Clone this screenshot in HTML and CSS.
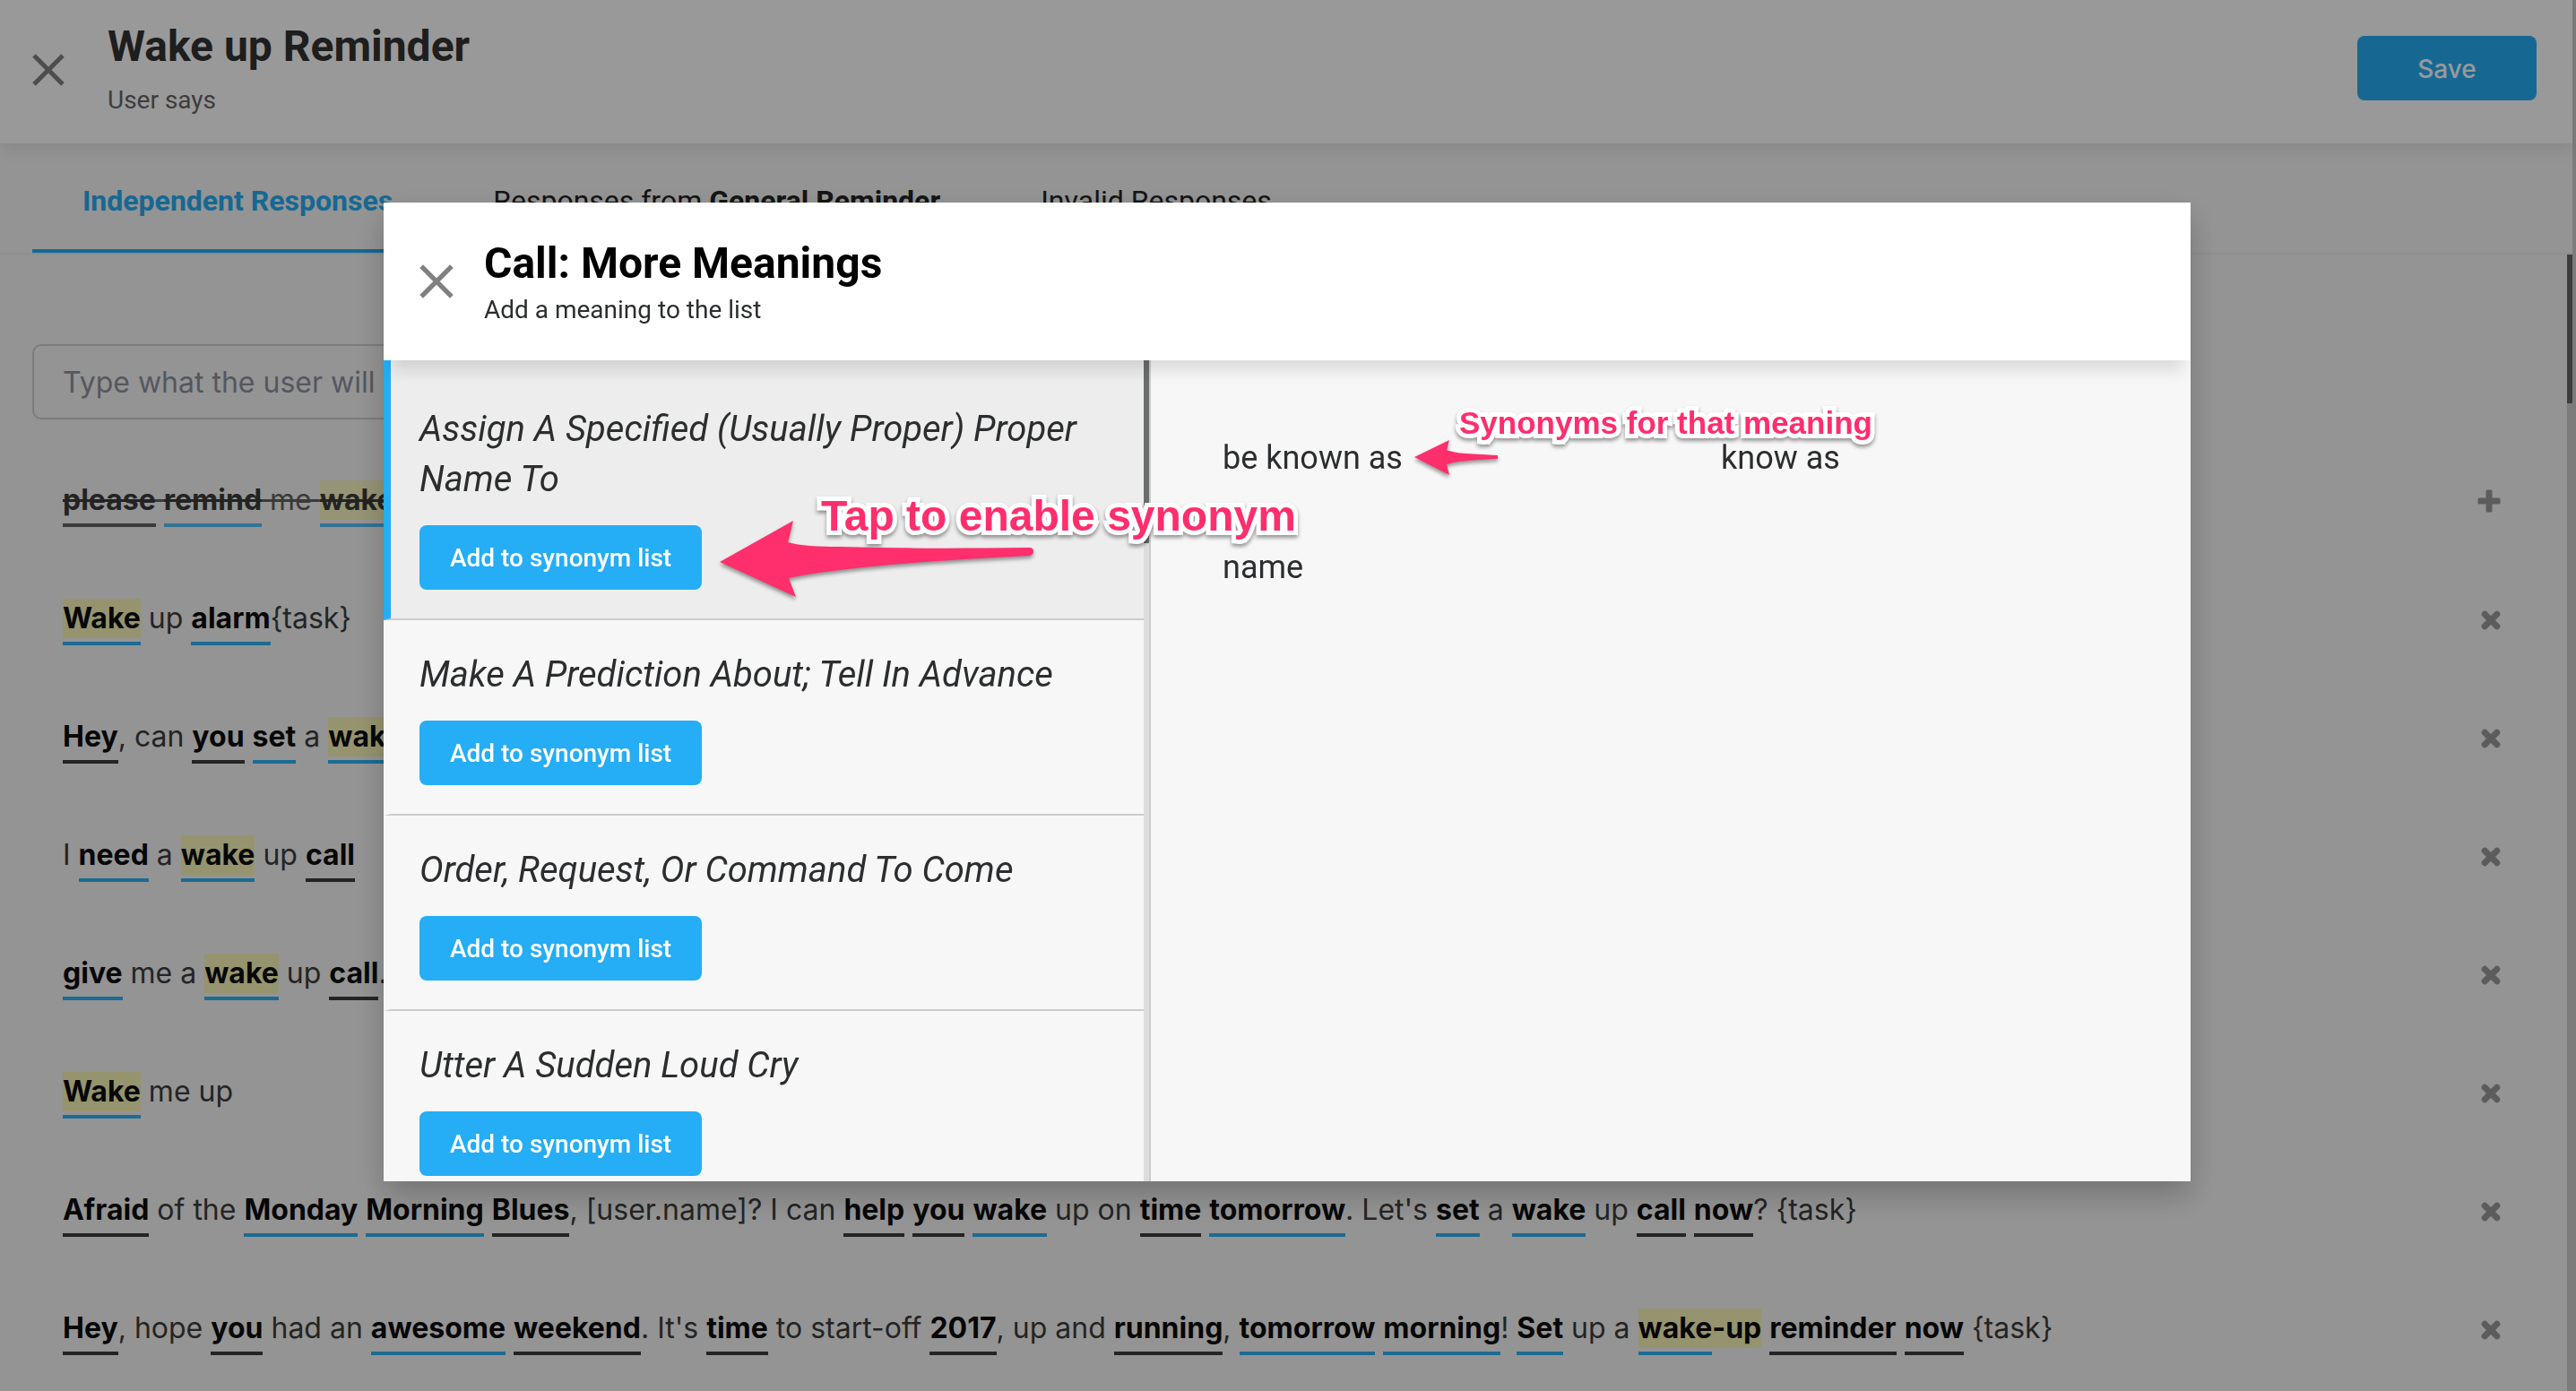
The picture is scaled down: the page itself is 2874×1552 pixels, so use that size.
FILE: index.html
```html
<!DOCTYPE html>
<html lang="en">
<head>
<meta charset="utf-8">
<title>Wake up Reminder</title>
<link rel="stylesheet" href="styles.css">
</head>
<body>
<svg class="sprite" aria-hidden="true">
  <symbol id="close" viewBox="0 0 36 36"><path d="M2 2 34 34M34 2 2 34" fill="none" stroke="currentColor" stroke-width="5"/></symbol>
  <symbol id="times" viewBox="0 0 22 22"><path d="M4.500 4.500 17.500 17.500M17.500 4.500 4.500 17.500" fill="none" stroke="currentColor" stroke-width="5"/><path d="M4.200 4.200 17.800 17.800M17.800 4.200 4.200 17.800" fill="none" stroke="currentColor" stroke-width="7" stroke-linecap="round"/></symbol>
  <symbol id="plus" viewBox="0 0 26 26"><path d="M9.500 2Q9.500 0.500 11 0.500H15Q16.500 0.500 16.500 2V9.500H24Q25.500 9.500 25.500 11V15Q25.500 16.500 24 16.500H16.500V24Q16.500 25.500 15 25.500H11Q9.500 25.500 9.500 24V16.500H2Q0.500 16.500 0.500 15V11Q0.500 9.500 2 9.500H9.500Z" fill="currentColor"/></symbol>
</svg>

<div class="page">
  <header class="topbar">
    <button class="close" type="button" aria-label="Close"><svg><use href="#close"/></svg></button>
    <div class="heading">
      <h1>Wake up Reminder</h1>
      <p>User says</p>
    </div>
    <button class="btn save" type="button">Save</button>
  </header>

  <nav class="tabs">
    <a class="tab active" href="#independent">Independent Responses</a>
    <a class="tab" href="#general">Responses from <b>General Reminder</b></a>
    <a class="tab" href="#invalid">Invalid Responses</a>
  </nav>

  <main class="content">
    <div class="feed">
      <input class="entry" type="text" aria-label="User phrase" placeholder="Type what the user will say">
      <ul class="phrases">
        <li class="removed"><p><s><b>please</b> <b class="syn">remind</b> me <b class="syn key">wake</b></s></p><button class="act" type="button" aria-label="Add"><svg class="plus"><use href="#plus"/></svg></button></li>
        <li><p><b class="syn key">Wake</b> up <b class="syn">alarm</b>{task}</p><button class="act" type="button" aria-label="Remove"><svg><use href="#times"/></svg></button></li>
        <li><p><b>Hey</b>, can <b>you</b> <b class="syn">set</b> a <b class="syn key">wake</b></p><button class="act" type="button" aria-label="Remove"><svg><use href="#times"/></svg></button></li>
        <li><p>I <b class="syn">need</b> a <b class="syn key">wake</b> up <b>call</b></p><button class="act" type="button" aria-label="Remove"><svg><use href="#times"/></svg></button></li>
        <li><p><b class="syn">give</b> me a <b class="syn key">wake</b> up <b>call</b>.</p><button class="act" type="button" aria-label="Remove"><svg><use href="#times"/></svg></button></li>
        <li><p><b class="syn key">Wake</b> me up</p><button class="act" type="button" aria-label="Remove"><svg><use href="#times"/></svg></button></li>
        <li><p><b>Afraid</b> of the <b class="syn">Monday</b> <b class="syn">Morning</b> <b>Blues</b>, [user.name]? I can <b>help</b> <b>you</b> <b class="syn">wake</b> up on <b>time</b> <b class="syn">tomorrow</b>. Let's <b class="syn">set</b> a <b class="syn">wake</b> up <b>call</b> <b>now</b>? {task}</p><button class="act" type="button" aria-label="Remove"><svg><use href="#times"/></svg></button></li>
        <li><p><b>Hey</b>, hope <b>you</b> had an <b class="syn">awesome</b> <b>weekend</b>. It's <b>time</b> to start-off <b>2017</b>, up and <b>running</b>, <b class="syn">tomorrow</b> <b class="syn">morning</b>! <b class="syn">Set</b> up a <b class="syn key">wake</b><b class="key plain">-up</b> <b>reminder</b> <b>now</b> {task}</p><button class="act" type="button" aria-label="Remove"><svg><use href="#times"/></svg></button></li>
      </ul>
    </div>
    <div class="track"><div class="thumb"></div></div>
  </main>
</div>

<div class="overlay">
  <section class="modal" role="dialog" aria-labelledby="modal-title">
    <header class="modal-head">
      <button class="close" type="button" aria-label="Close"><svg><use href="#close"/></svg></button>
      <div class="heading">
        <h2 id="modal-title">Call: More Meanings</h2>
        <p>Add a meaning to the list</p>
      </div>
    </header>
    <div class="modal-body">
      <ul class="meanings">
        <li class="selected"><em>Assign A Specified (Usually Proper) Proper Name To</em><button class="btn" type="button">Add to synonym list</button></li>
        <li><em>Make A Prediction About; Tell In Advance</em><button class="btn" type="button">Add to synonym list</button></li>
        <li><em>Order, Request, Or Command To Come</em><button class="btn" type="button">Add to synonym list</button></li>
        <li><em>Utter A Sudden Loud Cry</em><button class="btn" type="button">Add to synonym list</button></li>
      </ul>
      <div class="rail"><div class="rail-thumb"></div></div>
      <ul class="synonyms">
        <li>be known as</li>
        <li>know as</li>
        <li>name</li>
      </ul>
    </div>

    <p class="note note-tap">Tap to enable synonym</p>
    <svg class="arrow arrow-tap" viewBox="0 0 352 86"><path d="M1 46 83 0 77 24C90 28 110 29 134 29 200 31 270 31 346 30Q351 30 351 34Q351 38 346 39C290 42 240 45 192 49 150 53 110 57 78 64L86 85Z"/></svg>
    <p class="note note-syn">Synonyms for that meaning</p>
    <svg class="arrow arrow-syn" viewBox="0 0 94 40"><path d="M0 19 39 0 36 11C46 15 56 15 93 17V21C76 22 54 22 36 27L39 39Z"/></svg>
  </section>
</div>
</body>
</html>
```
FILE: styles.css
```css
* { box-sizing: border-box; margin: 0; padding: 0; }

html, body { height: 100%; }

body {
  overflow: hidden;
  background: #cfcfcf;
  color: #2b2d2e;
  font-family: Roboto, "Liberation Sans", sans-serif;
  font-size: 32px;
}

ul { list-style: none; }
button { border: 0; background: none; font: inherit; color: inherit; }
svg { display: block; }
.sprite { position: absolute; width: 0; height: 0; }

.page {
  display: flex;
  flex-direction: column;
  height: 100%;
  margin-right: 4px;
  background: #f7f7f7;
}

/* top bar */
.topbar {
  z-index: 1;
  display: flex;
  align-items: center;
  flex: none;
  height: 160px;
  padding: 0 40px 8px 36px;
  background: #fff;
  box-shadow: 0 8px 16px rgba(0, 0, 0, .08);
}
.close { width: 36px; height: 36px; color: #808080; }
.close svg { width: 36px; height: 36px; }
.topbar .close { margin-top: 4px; }
.topbar .heading { flex: 1; padding-left: 48px; }
h1, h2 { font-size: 48px; line-height: 56px; font-weight: 700; }
h1 { color: #333; }
.topbar p { margin-top: 16px; font-size: 28px; line-height: 32px; color: #666; }
.btn {
  height: 72px;
  padding: 0 34px;
  border-radius: 8px;
  background: #25adf5;
  color: #fff;
  font-size: 28px;
  font-weight: 500;
}
.save { width: 200px; padding-top: 2px; font-family: Inter, sans-serif; }

/* tabs */
.tabs {
  display: flex;
  flex: none;
  padding: 0 36px;
  border-bottom: 2px solid #eee;
}
.tab {
  height: 122px;
  padding: 0 56px;
  border-bottom: 4px solid transparent;
  color: #222;
  font-size: 32px;
  line-height: 128px;
  text-decoration: none;
}
.tab.active { border-color: #25adf5; color: #25adf5; font-weight: 700; }

/* phrases */
.content { display: flex; flex: 1; min-height: 0; overflow: hidden; }
.feed { flex: 1; padding: 100px 36px 0; }
.entry {
  display: block;
  width: 60%;
  height: 84px;
  padding: 0 32px;
  border: 2px solid #cfcfcf;
  border-radius: 10px;
  background: transparent;
  font-family: Inter, sans-serif;
  font-size: 32px;
}
.entry::placeholder { color: #8e929e; }
.phrases { padding: 25px 38px 0 34px; font-family: Inter, sans-serif; }
.phrases li {
  display: flex;
  align-items: center;
  justify-content: space-between;
  height: 132px;
  color: #3d3d3d;
}
.phrases p { margin-top: 6px; }
.phrases b {
  display: inline-block;
  padding-bottom: 4px;
  border-bottom: 4px solid #3d3d3d;
  color: #0d0d0d;
  font-weight: 700;
  line-height: 44px;
}
.phrases b.syn { border-color: #2fb3f5; }
.phrases b.plain { border-color: transparent; }
.phrases b.key { background: #f9f7b8; background-clip: content-box; }
.phrases .removed p { opacity: .8; }
.phrases .removed b { text-decoration: line-through; }
.act { width: 26px; height: 26px; color: #999; }
.act svg { width: 22px; height: 22px; margin: 2px 0 0 4px; }
.act svg.plus { width: 26px; height: 26px; margin: 0; }
.track { width: 6px; background: #cfcfcf; }
.thumb { height: 166px; background: #666; }

/* dialog */
.overlay {
  position: fixed;
  inset: 0;
  z-index: 2;
  display: flex;
  justify-content: center;
  padding: 226px 2px 234px 0;
  background: rgba(0, 0, 0, .4);
}
.modal {
  position: relative;
  display: flex;
  flex-direction: column;
  width: 80%;
  max-width: 2016px;
  background: #f7f7f7;
  box-shadow: 0 16px 32px rgba(0, 0, 0, .22);
}
.modal-head {
  z-index: 1;
  display: flex;
  align-items: center;
  flex: none;
  height: 176px;
  padding: 0 40px;
  background: #fff;
  box-shadow: 0 20px 16px -8px rgba(0, 0, 0, .11);
}
.modal-head .heading { padding-left: 34px; }
.modal-head .close { width: 38px; height: 38px; }
.modal-head .close svg { width: 38px; height: 38px; }
.modal-head p { margin-top: 8px; font-size: 28px; line-height: 32px; }
h2 { color: #000; }

.modal-body { display: flex; flex: 1; min-height: 0; }
.meanings { flex: 0 0 848px; overflow: hidden; }
.meanings li {
  display: flex;
  flex-direction: column;
  align-items: flex-start;
  gap: 23px;
  padding: 33px 60px 32px 32px;
  border-bottom: 2px solid #ccc;
  border-left: 8px solid transparent;
}
.meanings li.selected { padding-top: 49px; border-left-color: #25adf5; background: #ededed; }
.meanings em { font-size: 40px; line-height: 56px; }
.rail { width: 8px; border-right: 2px solid #ccc; background: #ddd; }
.rail-thumb { height: 204px; background: #6b6d6d; }

.synonyms {
  display: grid;
  grid-template-columns: 1fr 1fr;
  grid-auto-rows: 122px;
  flex: 1;
  padding: 48px 24px;
}
.synonyms li { padding: 0 56px; font-size: 36px; line-height: 122px; }

/* tutorial callouts */
.note, .arrow { position: absolute; z-index: 3; }
.note {
  color: #ff2e6d;
  font-family: "Liberation Sans", Arial, sans-serif;
  font-weight: 700;
  white-space: nowrap;
  -webkit-text-stroke: 10px #fff;
  paint-order: stroke fill;
  filter: drop-shadow(0 3px 2px rgba(0, 0, 0, .4));
}
.arrow { fill: #ff2e6d; filter: drop-shadow(0 3px 2px rgba(0, 0, 0, .4)); }
.note-tap { top: 322px; left: 488px; font-size: 48px; line-height: 56px; }
.note-syn { top: 224px; left: 1200px; font-size: 35px; line-height: 44px; }
.arrow-tap { top: 355px; left: 374px; width: 352px; height: 86px; }
.arrow-syn { top: 265px; left: 1150px; width: 94px; height: 40px; }
```
